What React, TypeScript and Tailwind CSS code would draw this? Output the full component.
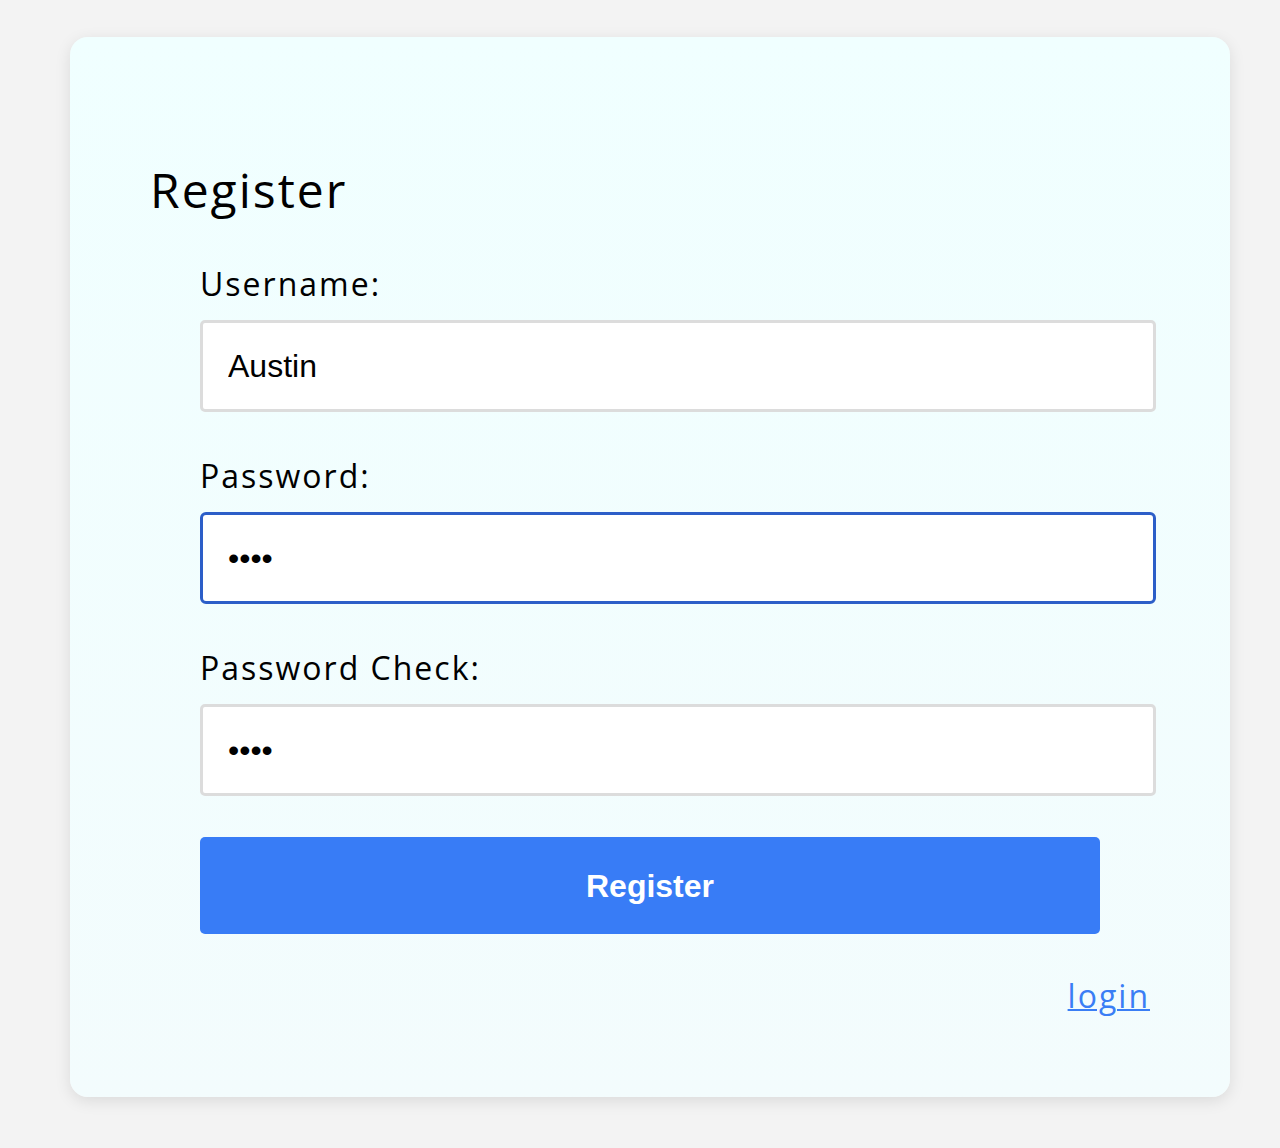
import { useState } from 'react'

const labelCls = "block text-[32px] leading-[32px] tracking-[2px] text-black [font-family:'Open_Sans',sans-serif]"
const inputCls =
  "block w-full h-[92px] rounded-[5px] border-[3px] bg-white pl-[25px] text-[32px] text-black outline-none [font-family:'Liberation_Sans',Arial,sans-serif]"

export default function App() {
  const [username, setUsername] = useState('Austin')
  const [password, setPassword] = useState('1234')
  const [check, setCheck] = useState('1234')

  return (
    <div className="min-h-screen bg-[#f3f3f3] pl-[70px] pr-[50px] pt-[37px] pb-[51px]">
      <div className="h-[1060px] rounded-[18px] bg-gradient-to-b from-[#f0ffff] to-[#f3fcfd] pl-[80px] pt-[129px] pr-[74px] shadow-[0_4px_16px_rgba(0,0,0,0.1)]">
        <h1 className="text-[48px] leading-[48px] tracking-[2px] text-black [font-family:'Open_Sans',sans-serif]">Register</h1>

        <form className="mt-[54px] pl-[50px]" onSubmit={(e) => e.preventDefault()}>
          <label className={labelCls}>Username:</label>
          <input
            className={`${inputCls} mt-[20px] border-[#dcdcdc]`}
            value={username}
            onChange={(e) => setUsername(e.target.value)}
          />

          <label className={`${labelCls} mt-[48px]`}>Password:</label>
          <input
            type="password"
            className={`${inputCls} mt-[20px] rounded-[6px] border-[#2c5ec8]`}
            value={password}
            onChange={(e) => setPassword(e.target.value)}
          />

          <label className={`${labelCls} mt-[48px]`}>Password Check:</label>
          <input
            type="password"
            className={`${inputCls} mt-[20px] border-[#dcdcdc]`}
            value={check}
            onChange={(e) => setCheck(e.target.value)}
          />

          <button
            type="submit"
            className="mt-[41px] block h-[97px] w-[900px] rounded-[5px] bg-[#387cf6] text-[32px] font-bold text-white [font-family:'Liberation_Sans',Arial,sans-serif]"
          >
            Register
          </button>

          <div className="mt-[46px] pr-[6px] text-right">
            <a
              href="#"
              className="text-[32px] leading-[32px] tracking-[2px] text-[#3a7ef5] underline decoration-2 [font-family:'Open_Sans',sans-serif]"
            >
              login
            </a>
          </div>
        </form>
      </div>
    </div>
  )
}
